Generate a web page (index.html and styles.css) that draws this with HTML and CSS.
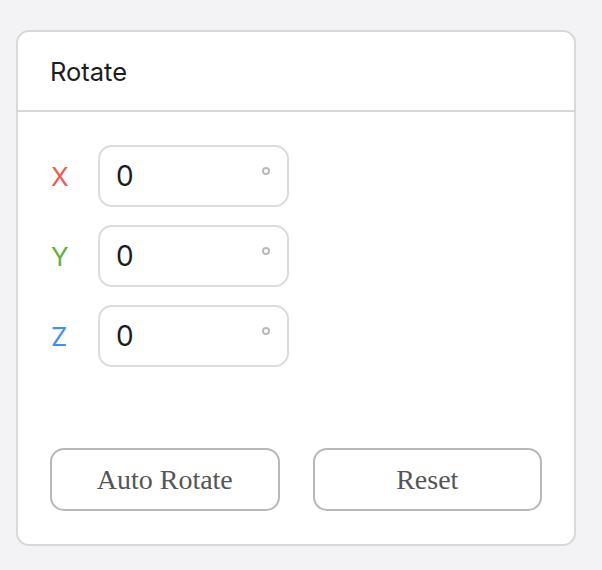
FILE: index.html
```html
<!DOCTYPE html>
<html lang="en">
<head>
<meta charset="utf-8">
<title>Rotate</title>
<link rel="stylesheet" href="styles.css">
</head>
<body>
<div class="card">
  <div class="card-header">Rotate</div>
  <div class="card-body">
    <div class="axes">
      <div class="axis-row">
        <span class="axis-label axis-x">X</span>
        <div class="field"><span class="field-value">0</span><span class="deg"></span></div>
      </div>
      <div class="axis-row">
        <span class="axis-label axis-y">Y</span>
        <div class="field"><span class="field-value">0</span><span class="deg"></span></div>
      </div>
      <div class="axis-row">
        <span class="axis-label axis-z">Z</span>
        <div class="field"><span class="field-value">0</span><span class="deg"></span></div>
      </div>
    </div>
    <div class="actions">
      <button class="btn" type="button">Auto Rotate</button>
      <button class="btn" type="button">Reset</button>
    </div>
  </div>
</div>
</body>
</html>
```

FILE: styles.css
```css
html, body {
  margin: 0;
  padding: 0;
}
body {
  background: #f3f3f6;
  font-family: Inter, "Noto Sans", sans-serif;
  padding: 30px 0 0 16px;
  height: 570px;
  box-sizing: border-box;
}
.card {
  width: 560px;
  height: 516px;
  box-sizing: border-box;
  background: #fff;
  border: 2px solid #d8d8dc;
  border-radius: 13px;
  display: flex;
  flex-direction: column;
}
.card-header {
  height: 80px;
  box-sizing: border-box;
  border-bottom: 2px solid #d8d8dc;
  padding: 0 32px;
  display: flex;
  align-items: center;
  font-size: 25.5px;
  color: #1d1d1f;
}
.card-body {
  flex: 1;
  padding: 33px 32px 33px;
  display: flex;
  flex-direction: column;
}
.axes {
  display: flex;
  flex-direction: column;
  gap: 18px;
}
.axis-row {
  display: flex;
  align-items: center;
}
.axis-label {
  width: 48px;
  font-size: 26px;
  padding-left: 1px;
  box-sizing: border-box;
}
.axis-x { color: #ee5b55; }
.axis-y { color: #5fb23b; }
.axis-z { color: #3d8ef5; }
.field {
  width: 191px;
  height: 62px;
  box-sizing: border-box;
  border: 2px solid #dcdcdc;
  border-radius: 14px;
  display: flex;
  align-items: center;
  padding: 0 17px 0 16px;
}
.field-value {
  flex: 1;
  font-size: 28px;
  color: #1d1d1f;
  line-height: 1;
}
.deg {
  align-self: flex-start;
  margin-top: 20px;
  width: 8px;
  height: 8px;
  box-sizing: border-box;
  border: 2px solid #b9b9b9;
  border-radius: 50%;
}
.actions {
  margin-top: auto;
  display: grid;
  grid-template-columns: 1fr 1fr;
  gap: 33px;
}
.btn {
  height: 63px;
  background: #fff;
  border: 2px solid #b8b8bc;
  border-radius: 14px;
  font-family: "Liberation Serif", "Times New Roman", serif;
  font-size: 28px;
  color: #555;
  padding: 0;
}
```
